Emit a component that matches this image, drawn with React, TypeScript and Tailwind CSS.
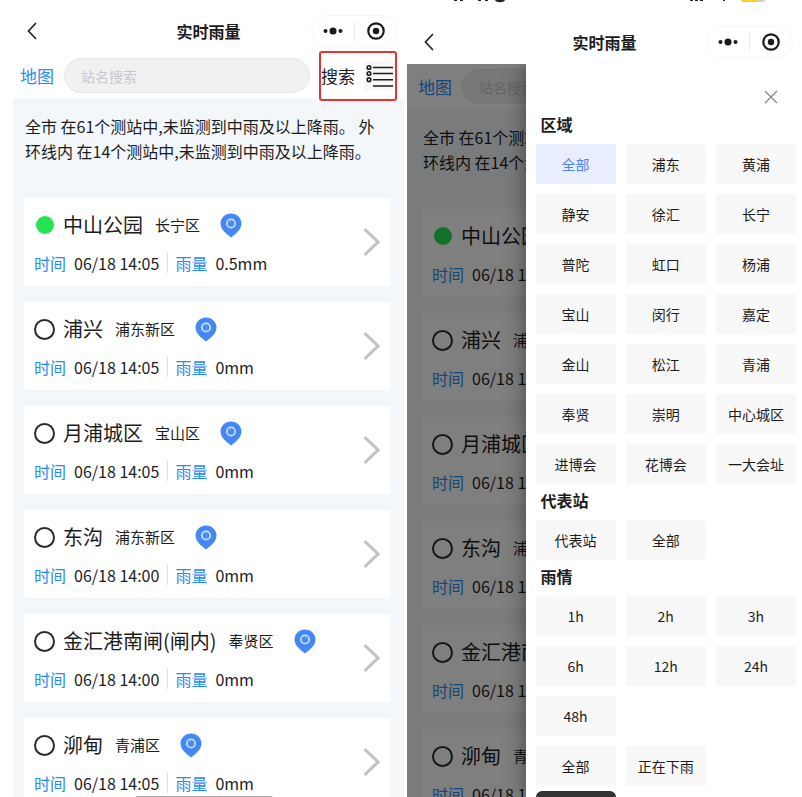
import clsx from "clsx"

type Station = {
    name: string
    district: string
    time: string
    rain: string
    raining?: boolean
}

const stations: Station[] = [
    { name: "中山公园", district: "长宁区", time: "06/18 14:05", rain: "0.5mm", raining: true },
    { name: "浦兴", district: "浦东新区", time: "06/18 14:05", rain: "0mm" },
    { name: "月浦城区", district: "宝山区", time: "06/18 14:05", rain: "0mm" },
    { name: "东沟", district: "浦东新区", time: "06/18 14:00", rain: "0mm" },
    { name: "金汇港南闸(闸内)", district: "奉贤区", time: "06/18 14:00", rain: "0mm" },
    { name: "泖甸", district: "青浦区", time: "06/18 14:05", rain: "0mm" },
]

const areas = [
    "全部", "浦东", "黄浦",
    "静安", "徐汇", "长宁",
    "普陀", "虹口", "杨浦",
    "宝山", "闵行", "嘉定",
    "金山", "松江", "青浦",
    "奉贤", "崇明", "中心城区",
    "进博会", "花博会", "一大会址",
]

const PinIcon = () => (
    <svg width="22" height="25" viewBox="0 0 22 25" aria-hidden="true">
        <path d="M11 0.5C5 0.5 0.5 5 0.5 10.6c0 4 2.4 7.1 5.6 9.9 1.6 1.4 3.2 2.6 4.9 4 1.7-1.4 3.3-2.6 4.9-4 3.2-2.8 5.6-5.9 5.6-9.9C21.5 5 17 0.5 11 0.5z" fill="#4587f5" />
        <circle cx="11" cy="10.5" r="4.2" fill="#4a8bf6" stroke="#c9dcfc" strokeWidth="1.8" />
    </svg>
)

const ListIcon = () => (
    <svg width="29" height="29" viewBox="0 0 29 29" fill="none" stroke="#1c1c1c" strokeWidth="1.6" aria-hidden="true">
        <path d="M8 6.5h20M8 12.5h20M8 18.7h20M8 25h20" />
        <circle cx="4" cy="6.5" r="1.8" />
        <circle cx="4" cy="12.5" r="1.8" />
        <circle cx="4" cy="18.7" r="1.8" />
    </svg>
)

const NavBar = ({ className }: { className: string }) => (
    <header className={clsx("grid grid-cols-[87px_1fr_87px] items-center", className)}>
        <button type="button" aria-label="返回" className="flex h-11 items-center pl-2">
            <svg width="10" height="18" viewBox="0 0 10 18" fill="none" stroke="#222" strokeWidth="1.7" aria-hidden="true">
                <path d="M9 1L1.5 9L9 17" />
            </svg>
        </button>
        <h1 className="text-center text-base leading-5 font-bold">实时雨量</h1>
        <div className="flex h-8 items-center rounded-full border border-[#f7f7f7]">
            <button type="button" aria-label="更多" className="flex flex-1 justify-center">
                <svg width="20" height="8" viewBox="0 0 20 8" fill="#1a1a1a" aria-hidden="true">
                    <circle cx="2.5" cy="4" r="2" />
                    <circle cx="10" cy="4" r="3.5" />
                    <circle cx="17.5" cy="4" r="2" />
                </svg>
            </button>
            <span className="h-5 w-px bg-[#eeeeee]" />
            <button type="button" aria-label="关闭小程序" className="flex flex-1 justify-center">
                <svg width="18" height="18" viewBox="0 0 18 18" aria-hidden="true">
                    <circle cx="9" cy="9" r="7.7" fill="none" stroke="#1a1a1a" strokeWidth="2.2" />
                    <circle cx="9" cy="9" r="3.2" fill="#1a1a1a" />
                </svg>
            </button>
        </div>
    </header>
)

const StationCard = ({ station }: { station: Station }) => (
    <li className="flex items-center justify-between bg-white px-[10px] py-[11px]">
        <div>
            <div className="flex h-8 items-center">
                <span className="flex w-[21px] justify-center">
                    <span
                        className={clsx(
                            "rounded-full",
                            station.raining ? "size-[18px] bg-[#27e353]" : "size-[21px] border-2 border-[#2a2a2a]"
                        )}
                    />
                </span>
                <h2 className="ml-2 text-xl leading-7">{station.name}</h2>
                <span className="ml-3 text-[15px]">{station.district}</span>
                <button type="button" aria-label="定位" className="ml-5">
                    <PinIcon />
                </button>
            </div>
            <div className="mt-[10px] flex h-6 items-center gap-2 text-base">
                <span className="text-[#2a8af3]">时间</span>
                <span>{station.time}</span>
                <span className="h-5 w-px bg-[#dddddd]" />
                <span className="-ml-px text-[#2a8af3]">雨量</span>
                <span>{station.rain}</span>
            </div>
        </div>
        <svg width="17" height="28" viewBox="0 0 17 28" fill="none" stroke="#c2c2c2" strokeWidth="3" aria-hidden="true">
            <path d="M1.5 1L15 14L1.5 27" />
        </svg>
    </li>
)

const RainPage = ({ id, rowClass, listClass, marked }: { id: string; rowClass: string; listClass: string; marked?: boolean }) => (
    <div className="flex min-h-0 flex-1 flex-col">
        <form className={clsx("flex h-[45px] shrink-0 items-center gap-[10px] bg-white pr-[7px]", rowClass)}>
            <a href="#map" className="shrink-0 text-[17px] leading-6 text-[#2a8af3]">地图</a>
            <label htmlFor={id} className="sr-only">站名搜索</label>
            <input
                id={id}
                type="text"
                placeholder="站名搜索"
                className="h-[35px] w-full min-w-0 rounded-full border border-[#e4e6ea] bg-[#f1f1f2] px-4 text-sm placeholder:text-[#c6c8ce]"
            />
            <div className={clsx("-ml-px flex h-[50px] shrink-0 items-center gap-[10px] rounded-[3px] border-2 pr-px", marked ? "relative z-10 border-[#e2372f]" : "border-transparent")}>
                <button type="submit" className="text-[17px] leading-6">搜索</button>
                <button type="button" aria-label="筛选" className="bg-[#f7f7f7]">
                    <ListIcon />
                </button>
            </div>
        </form>
        <div className={clsx("min-h-0 flex-1 overflow-hidden bg-[#f3f7fa] pr-[14px] pt-4", listClass)}>
            <p className="pr-2 pl-px text-base leading-[25px]">
                全市 在61个测站中,未监测到中雨及以上降雨。 外环线内 在14个测站中,未监测到中雨及以上降雨。
            </p>
            <ul className="mt-[34px] flex flex-col gap-4">
                {stations.map((station) => (
                    <StationCard key={station.name} station={station} />
                ))}
            </ul>
        </div>
    </div>
)

const OptionGroup = ({ options, active }: { options: string[]; active?: string }) => (
    <div className="grid grid-cols-3 gap-[10px]">
        {options.map((option) => (
            <button
                key={option}
                type="button"
                className={clsx("h-10 rounded-xs text-sm", option === active ? "bg-[#e9effe] text-[#4a84f0]" : "bg-[#f8f8f8]")}
            >
                {option}
            </button>
        ))}
    </div>
)

const GroupTitle = ({ children }: { children: string }) => (
    <h2 className="h-9 pl-[5px] text-base leading-8 font-bold">{children}</h2>
)

const FilterDrawer = () => (
    <aside className="absolute inset-y-0 right-0 w-[70%] overflow-hidden bg-white pr-[6px] pl-[10px] shadow-[0_0_20px_rgba(0,0,0,0.45)]">
        <div className="flex h-11 items-end justify-end pr-[18px] pb-1">
            <button type="button" aria-label="关闭">
                <svg width="14" height="14" viewBox="0 0 14 14" stroke="#888" strokeWidth="1.3" aria-hidden="true">
                    <path d="M1 1L13 13M13 1L1 13" />
                </svg>
            </button>
        </div>
        <GroupTitle>区域</GroupTitle>
        <OptionGroup options={areas} active="全部" />
        <GroupTitle>代表站</GroupTitle>
        <OptionGroup options={["代表站", "全部"]} />
        <GroupTitle>雨情</GroupTitle>
        <div className="flex flex-col gap-[10px]">
            <OptionGroup options={["1h", "2h", "3h", "6h", "12h", "24h", "48h"]} />
            <OptionGroup options={["全部", "正在下雨"]} />
        </div>
        <div className="mt-[5px] grid grid-cols-3 gap-[10px]">
            <button type="button" aria-label="确定" className="h-10 rounded-md bg-[#333333]" />
        </div>
    </aside>
)

const StatusBar = () => (
    <svg width="100%" height="4" viewBox="0 0 395 4" preserveAspectRatio="xMinYMin slice" aria-hidden="true">
        <path d="M47 0h3v1h-3zM53 0h3v1h-3zM71 0h3v1h-3zM78 0h3v1h-3z" fill="#222" />
        <path d="M88 0h10c-1 3-9 3-10 0z" fill="#222" />
        <path d="M283 0h3v1h-3zM288 0h3v1h-3zM293 0h3v1h-3zM316 0h2v1h-2z" fill="#222" />
        <path d="M334 0h16v2h-13q-3 0-3-2z" fill="#fbd12c" />
        <path d="M350 0h8q0 2-3 2h-5z" fill="#d0d0d0" />
    </svg>
)

const App = () => {
    return (
        <main className="grid h-screen grid-cols-[407fr_395fr] overflow-hidden bg-white font-['Noto_Sans_CJK_SC',sans-serif] text-[#1c1c1c]">
            <section className="relative flex min-h-0 flex-col pr-[3px] pl-[13px]">
                <NavBar className="px-[6px] pt-[9px]" />
                <RainPage id="search-list" rowClass="pl-[7px]" listClass="pl-[11px]" marked />
                <div className="absolute -bottom-1 left-1/2 h-[5px] w-[138px] -translate-x-1/2 rounded-full bg-[#aaaaaa]" />
            </section>
            <section className="flex min-h-0 flex-col">
                <div className="h-5">
                    <StatusBar />
                </div>
                <NavBar className="px-[9px]" />
                <div className="relative flex min-h-0 flex-1 overflow-hidden">
                    <RainPage id="search-filter" rowClass="pl-[11px]" listClass="pl-[15px]" />
                    <div className="absolute inset-0 bg-black/50" />
                    <FilterDrawer />
                </div>
            </section>
        </main>
    )
}

export default App
